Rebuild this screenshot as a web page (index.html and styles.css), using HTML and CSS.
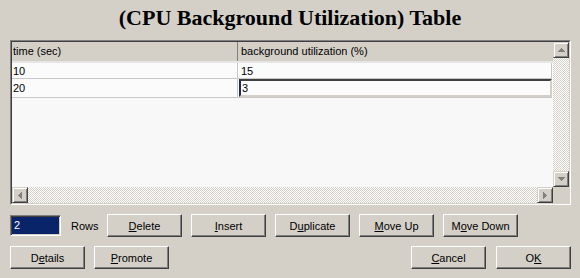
FILE: index.html
```html
<!DOCTYPE html>
<html lang="en">
<head>
  <meta charset="UTF-8" />
  <title>(CPU Background Utilization) Table</title>
  <link rel="stylesheet" href="styles.css">
</head>
<body>

  <h1 class="title">(CPU Background Utilization) Table</h1>

  <div class="grid-frame">
    <div class="grid-inner">
      <div class="grid-view">
        <div class="grid-head">
          <div class="hcell c1">time (sec)</div>
          <div class="hcell c2">background utilization (%)</div>
        </div>
        <div class="row">
          <div class="cell c1">10</div>
          <div class="cell c2">15</div>
        </div>
        <div class="row row-tall">
          <div class="cell c1">20</div>
          <div class="cell c2 edit">3</div>
        </div>
      </div>

      <div class="vscroll">
        <div class="sbtn">
          <svg width="7" height="4" viewBox="0 0 7 4"><path d="M3 0h1v1h-1zM2 1h3v1h-3zM1 2h5v1h-5zM0 3h7v1h-7z" fill="#808080"/></svg>
        </div>
        <div class="track"></div>
        <div class="sbtn">
          <svg width="7" height="4" viewBox="0 0 7 4"><path d="M0 0h7v1h-7zM1 1h5v1h-5zM2 2h3v1h-3zM3 3h1v1h-1z" fill="#808080"/></svg>
        </div>
      </div>

      <div class="hscroll">
        <div class="sbtn">
          <svg width="4" height="7" viewBox="0 0 4 7"><path d="M3 0h1v7h-1zM2 1h1v5h-1zM1 2h1v3h-1zM0 3h1v1h-1z" fill="#808080"/></svg>
        </div>
        <div class="track"></div>
        <div class="sbtn">
          <svg width="4" height="7" viewBox="0 0 4 7"><path d="M0 0h1v7h-1zM1 1h1v5h-1zM2 2h1v3h-1zM3 3h1v1h-1z" fill="#808080"/></svg>
        </div>
      </div>
      <div class="corner"></div>
    </div>
  </div>

  <div class="controls">
    <div class="ctl-row">
      <div class="rows-input">2</div>
      <span class="rows-label">Rows</span>
      <button class="btn"><u>D</u>elete</button>
      <button class="btn"><u>I</u>nsert</button>
      <button class="btn">D<u>u</u>plicate</button>
      <button class="btn"><u>M</u>ove Up</button>
      <button class="btn">M<u>o</u>ve Down</button>
    </div>
    <div class="ctl-row">
      <button class="btn first">D<u>e</u>tails</button>
      <button class="btn"><u>P</u>romote</button>
      <button class="btn push"><u>C</u>ancel</button>
      <button class="btn">O<u>K</u></button>
    </div>
  </div>

</body>
</html>
```

FILE: styles.css
```css
body {
  margin: 0;
  width: 580px;
  height: 278px;
  overflow: hidden;
  background: #d4d0c8;
  font-family: 'Liberation Sans', Arial, sans-serif;
  font-size: 11px;
  color: #000;
}

.title {
  margin: 0;
  height: 40px;
  line-height: 36px;
  text-align: center;
  font-family: 'Liberation Serif', 'Times New Roman', serif;
  font-size: 22px;
  font-weight: bold;
}

/* sunken table frame */
.grid-frame {
  margin-left: 10px;
  width: 561px;
  height: 165px;
  box-sizing: border-box;
  border: 1px solid;
  border-color: #808080 #fff #fff #808080;
}

.grid-inner {
  height: 100%;
  box-sizing: border-box;
  border: 1px solid;
  border-color: #404040 #d4d0c8 #d4d0c8 #404040;
  display: grid;
  grid-template-columns: 541px 16px;
  grid-template-rows: 145px 16px;
}

.grid-view {
  background: #f8f8f8;
  overflow: hidden;
}

.grid-head {
  display: flex;
  height: 19px;
  background: #d4d0c8;
  border-bottom: 2px solid #e6e6e6;
}

.hcell {
  line-height: 18px;
  white-space: nowrap;
}

.c1 {
  width: 226px;
  box-sizing: border-box;
  padding-left: 1px;
}

.hcell.c1 {
  border-right: 1px solid #808080;
}

.c2 {
  flex: 1;
  padding-left: 3px;
}

.row {
  display: flex;
  width: 540px;
  height: 16px;
  box-sizing: border-box;
  border-bottom: 1px solid #c8c8c8;
  background: #fbfbfb;
}

.row-tall {
  height: 19px;
}

.cell {
  padding-top: 2px;
  line-height: 13px;
  white-space: nowrap;
}

.row-tall .cell {
  padding-top: 1px;
  line-height: 17px;
}

.cell.c1 {
  border-right: 1px solid #c8c8c8;
}

.cell.c2 {
  border-right: 1px solid #c8c8c8;
}

.row-tall .cell.edit {
  margin-left: 1px;
  padding: 0 0 0 1px;
  line-height: 15px;
  border: 2px solid;
  border-color: #404040 #d4d0c8 #d4d0c8 #1e2a5e;
}

/* scrollbars */
.vscroll {
  display: flex;
  flex-direction: column;
}

.hscroll {
  display: flex;
}

.track {
  flex: 1;
  background: repeating-conic-gradient(#d4d0c8 0 25%, #fff 0 50%) 0 0 / 2px 2px;
}

.sbtn {
  width: 16px;
  height: 16px;
  box-sizing: border-box;
  background: #d4d0c8;
  border: 1px solid;
  border-color: #d4d0c8 #404040 #404040 #d4d0c8;
  box-shadow: inset 1px 1px #fff, inset -1px -1px #808080;
  display: flex;
  align-items: center;
  justify-content: center;
}

.corner {
  background: #d4d0c8;
}

/* buttons below the table */
.controls {
  padding: 9px 9px 0 10px;
}

.ctl-row {
  display: flex;
  align-items: center;
  height: 23px;
}

.ctl-row + .ctl-row {
  margin-top: 9px;
}

.rows-input {
  width: 51px;
  height: 21px;
  box-sizing: border-box;
  border: 1px solid;
  border-color: #808080 #fff #fff #808080;
  box-shadow: inset 1px 1px #404040, inset -1px -1px #d4d0c8;
  background: #0a246a;
  color: #fff;
  padding-left: 3px;
  line-height: 19px;
}

.rows-label {
  width: 46px;
  box-sizing: border-box;
  padding-left: 10px;
}

.btn {
  width: 75px;
  height: 23px;
  margin-left: 9px;
  padding: 0;
  font: inherit;
  color: #000;
  background: #d4d0c8;
  border: 1px solid;
  border-color: #fff #404040 #404040 #fff;
  box-shadow: inset -1px -1px #808080;
}

.rows-label + .btn,
.btn.first {
  margin-left: 0;
}

.btn.push {
  margin-left: auto;
  margin-right: 1px;
}
```
